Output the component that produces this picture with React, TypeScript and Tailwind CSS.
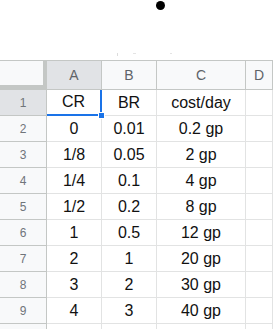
import React from 'react';

type Row = { cr: string; br: string; cost: string };

const rows: Row[] = [
  { cr: '0', br: '0.01', cost: '0.2 gp' },
  { cr: '1/8', br: '0.05', cost: '2 gp' },
  { cr: '1/4', br: '0.1', cost: '4 gp' },
  { cr: '1/2', br: '0.2', cost: '8 gp' },
  { cr: '1', br: '0.5', cost: '12 gp' },
  { cr: '2', br: '1', cost: '20 gp' },
  { cr: '3', br: '2', cost: '30 gp' },
  { cr: '4', br: '3', cost: '40 gp' },
];

const grid = 'grid grid-cols-[47px_55px_55px_89px_1fr]';
const rowHead =
  'h-[26px] flex items-center justify-center border-r border-b border-[#c4c7c5] text-[12px] text-[#70757a]';
const cell =
  'h-[26px] flex items-center justify-center border-r border-b border-[#e2e3e3] text-[16px] text-[#111]';

export default function App() {
  return (
    <div className="w-[273px] h-[329px] overflow-hidden bg-white font-['Liberation_Sans',Arial,sans-serif]">
      {/* blank area above the sheet, with the black dot */}
      <div className="h-[60px] flex flex-col">
        <div className="ml-[156px] mt-[1px] w-[9px] h-[9px] rounded-full bg-black" />
        <div className="mt-[43px] flex items-start h-[3px]">
          <div className="ml-[117px] w-px h-[3px] bg-[#dcdcdc]" />
          <div className="ml-[15px] w-[3px] h-px bg-[#e4e4e4]" />
          <div className="ml-[34px] w-[2px] h-px bg-[#e4e4e4]" />
        </div>
      </div>

      {/* column headers */}
      <div className={`${grid} border-t border-[#c4c7c5]`}>
        <div className="h-[29px] bg-[#f8f9fa] border-r-4 border-b-[5px] border-[#c4c7c5]" />
        <div className="h-[29px] flex items-center justify-center bg-[#e1e3e6] border-r border-b border-[#c4c7c5] text-[14px] text-[#5f6368]">
          A
        </div>
        {['B', 'C', 'D'].map((c) => (
          <div
            key={c}
            className="h-[29px] flex items-center justify-center bg-[#f8f9fa] border-r border-b border-[#c4c7c5] text-[14px] text-[#5f6368]"
          >
            {c}
          </div>
        ))}
      </div>

      {/* row 1 (selected A1) */}
      <div className={grid}>
        <div className={`${rowHead} bg-[#e1e3e6] text-[#5f6368]`}>1</div>
        <div className="relative h-[26px] flex items-center justify-center border-r-2 border-b-2 border-[#1a73e8] text-[16px] text-[#111]">
          CR
          <span className="absolute right-[-5px] bottom-[-5px] w-[7px] h-[7px] bg-[#1a73e8] border border-white" />
        </div>
        <div className={cell}>BR</div>
        <div className={cell}>cost/day</div>
        <div className={cell} />
      </div>

      {rows.map((r, i) => (
        <div key={i} className={grid}>
          <div className={`${rowHead} bg-[#f8f9fa]`}>{i + 2}</div>
          <div className={cell}>{r.cr}</div>
          <div className={cell}>{r.br}</div>
          <div className={cell}>{r.cost}</div>
          <div className={cell} />
        </div>
      ))}

      <div className={grid}>
        <div className={`${rowHead} bg-[#f8f9fa]`} />
        <div className={cell} />
        <div className={cell} />
        <div className={cell} />
        <div className={cell} />
      </div>
    </div>
  );
}
